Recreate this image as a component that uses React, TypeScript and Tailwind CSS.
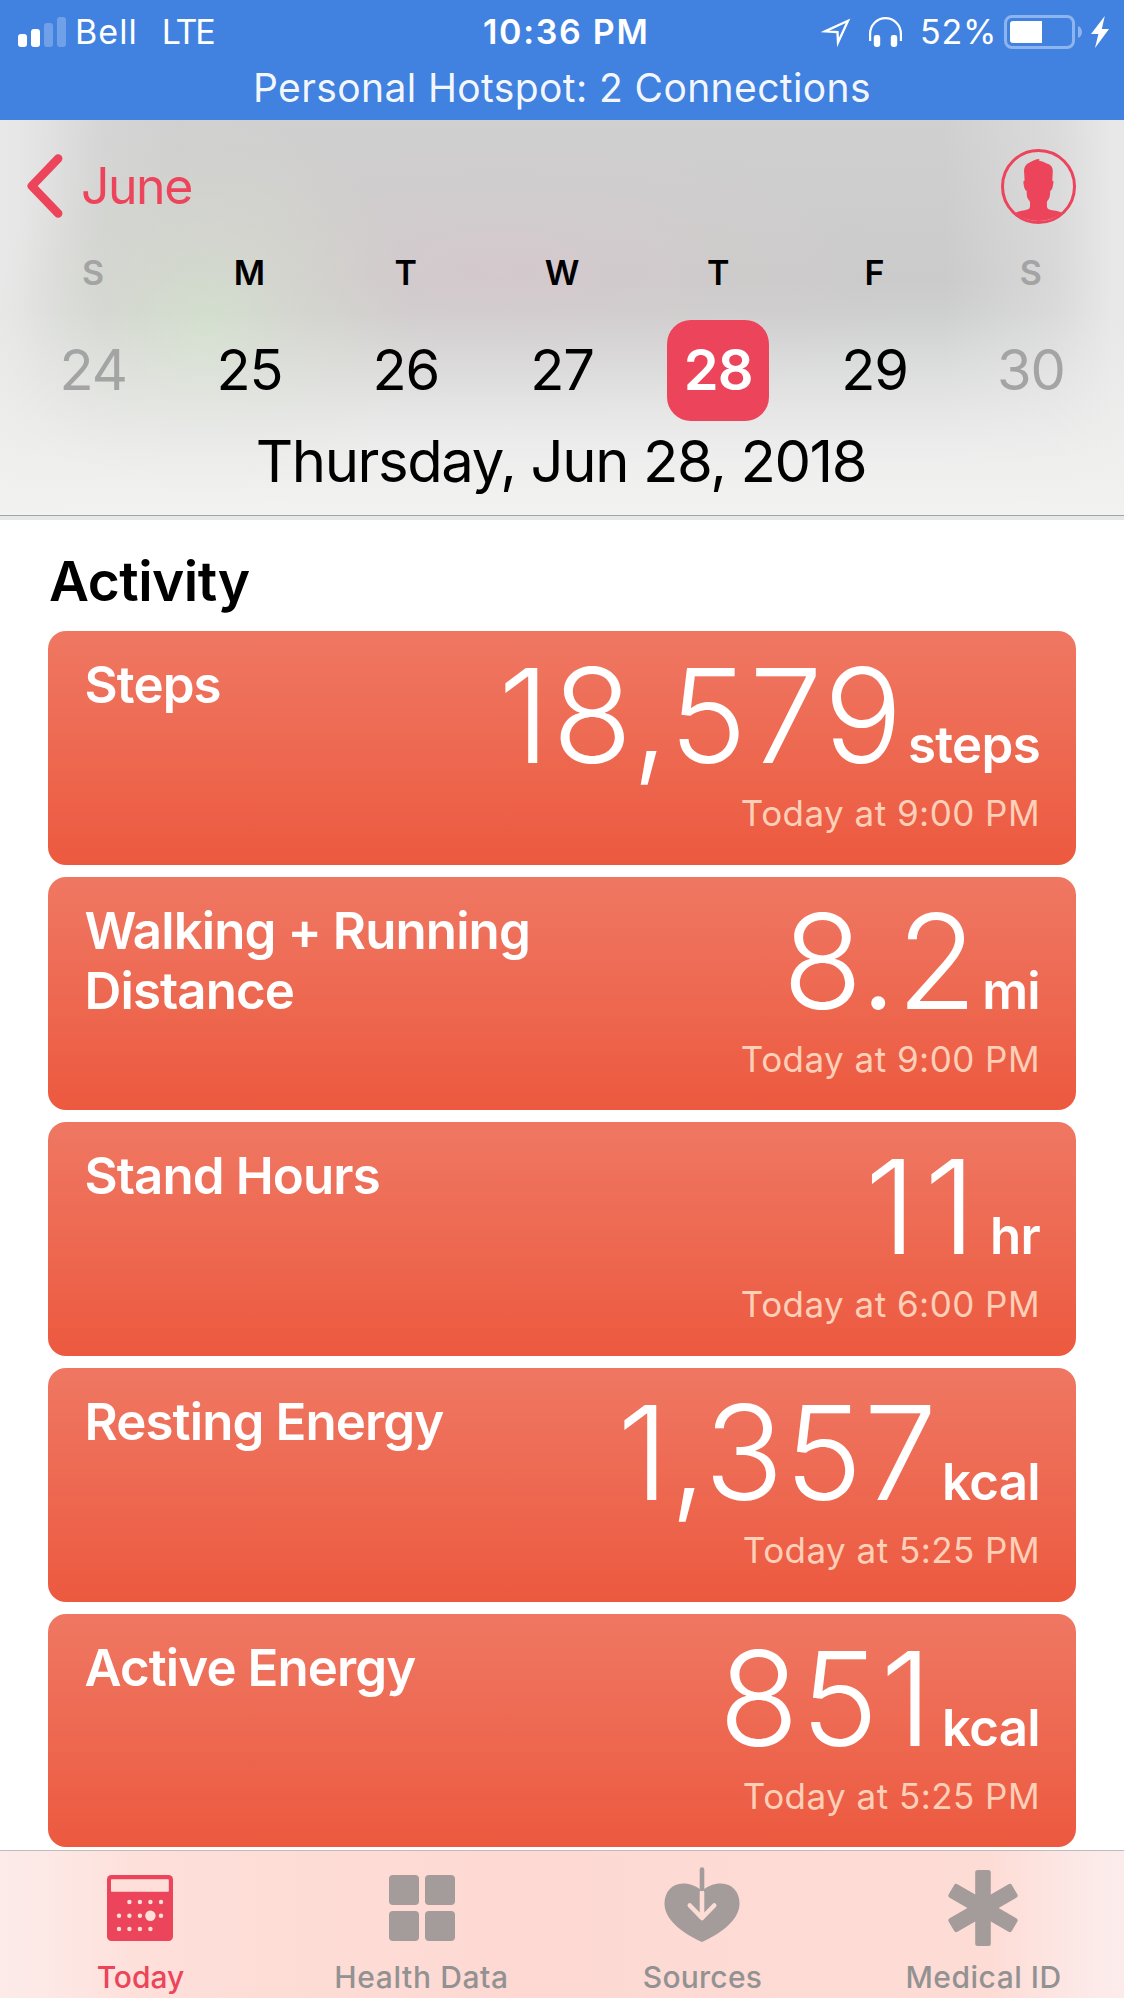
import type { ReactNode } from "react";
import clsx from "clsx";

type Metric = {
  title: string;
  value: string;
  unit: string;
  time: string;
  valueClass: string;
};

const WEEK = [
  { letter: "S", day: 24, weekend: true },
  { letter: "M", day: 25 },
  { letter: "T", day: 26 },
  { letter: "W", day: 27 },
  { letter: "T", day: 28, selected: true },
  { letter: "F", day: 29 },
  { letter: "S", day: 30, weekend: true },
];

const METRICS: Metric[] = [
  { title: "Steps", value: "18,579", unit: "steps", time: "Today at 9:00 PM", valueClass: "tracking-[2.4px] mr-[3px]" },
  { title: "Walking + Running Distance", value: "8.2", unit: "mi", time: "Today at 9:00 PM", valueClass: "mr-[5px]" },
  { title: "Stand Hours", value: "11", unit: "hr", time: "Today at 6:00 PM", valueClass: "tracking-[8px] mr-[6px]" },
  { title: "Resting Energy", value: "1,357", unit: "kcal", time: "Today at 5:25 PM", valueClass: "tracking-[1.1px] mr-[4px]" },
  { title: "Active Energy", value: "851", unit: "kcal", time: "Today at 5:25 PM", valueClass: "tracking-[2px] mr-[8px]" },
];

function SignalBars() {
  return (
    <div className="flex h-[30px] items-end gap-[4px]">
      <span className="h-[13px] w-[9px] rounded-[3px] bg-white" />
      <span className="h-[18px] w-[9px] rounded-[3px] bg-white" />
      <span className="h-[24px] w-[9px] rounded-[3px] bg-white/25" />
      <span className="h-[30px] w-[9px] rounded-[3px] bg-white/25" />
    </div>
  );
}

function Battery() {
  return (
    <div className="flex items-center gap-[3px]">
      <div className="h-[34px] w-[71px] rounded-[8px] border-[3px] border-white/40 p-[3px]">
        <div className="h-[22px] w-[32px] rounded-l-[3px] bg-white" />
      </div>
      <svg viewBox="0 0 4 12" className="h-[12px] w-[4px]">
        <path d="M0 0C2.5 1 4 3.2 4 6s-1.5 5-4 6Z" fill="#fff" fillOpacity=".4" />
      </svg>
    </div>
  );
}

function StatusBar() {
  return (
    <div className="h-[120px] bg-[#4182e1] text-white">
      <div className="flex h-[63px] items-center pl-[18px] pr-[15px] text-[34px] leading-[63px]">
        <div className="flex w-[465px] items-center">
          <SignalBars />
          <span className="ml-[9px] tracking-[1.07px]">Bell</span>
          <span className="ml-[24px] tracking-[-2.2px]">LTE</span>
        </div>
        <span className="font-semibold tracking-[1.7px]">10:36 PM</span>
        <div className="ml-auto flex items-center">
          <svg viewBox="0 0 30 30" className="h-[30px] w-[30px]" fill="none" stroke="#fff" strokeWidth="2.3">
            <path d="M4 14.4 27 3.8 17 25.5 16.5 15.2Z" strokeMiterlimit="6" />
          </svg>
          <svg viewBox="0 0 33 30" className="ml-[18px] h-[30px] w-[33px]">
            <path d="M1.1 24V17a15.4 15.8 0 0 1 30.8 0v7" fill="none" stroke="#fff" strokeWidth="2.2" />
            <rect x="4.8" y="18" width="6.4" height="12" rx="2.4" fill="#fff" />
            <rect x="21.8" y="18" width="6.4" height="12" rx="2.4" fill="#fff" />
          </svg>
          <span className="ml-[18px] w-[84px] tracking-[0.8px]">52%</span>
          <Battery />
          <svg viewBox="0 0 18 32" className="ml-[9px] h-[32px] w-[18px]">
            <path d="M13.8 0 0 18h7.4L4 32 18 13h-7.2Z" fill="#fff" />
          </svg>
        </div>
      </div>
      <div className="text-center text-[39px] leading-[50px] tracking-[0.39px] text-white/95">
        Personal Hotspot: 2 Connections
      </div>
    </div>
  );
}

function ProfileIcon() {
  return (
    <svg viewBox="0 0 75 75" className="h-[75px] w-[75px]">
      <circle cx="37.5" cy="37.5" r="36" fill="none" stroke="#ec445b" strokeWidth="3" />
      <path
        d="M38.3 10c-3.2 0-5.2 1.2-7.3 2.3-2.6 1.4-5.2 2-7 5.3-1.2 2.4-1 4.8-.8 7l.4 7.2c-1.3 0-1.4 1-1 3.2.5 3 1.2 6.5 3 6.8.2 3.2.1 6.4 1.4 8.2 1.1 1.5 2 1.9 2 3.5 0 3.5.2 5.6-1.4 6.6-2.6 1.6-8.2 1.2-13.2 3.6a36 36 0 0 0 46.2 0c-5-2.4-10.7-2-13.3-3.6-1.5-1-1.4-3.1-1.4-6.600 0-1.600.9-2 1.900-3.500 1.300-1.800 1.200-5 1.500-8.200 1.700-.3 2.400-3.800 2.900-6.800.4-2.200.3-3.200-.9-3.200l.4-7.200c.2-3 .1-5.800-1.600-7.600-1.300-1.500-3-2.200-4.500-2.500-1.600-1-4-2.500-7.300-2.500Z"
        fill="#ec445b"
      />
    </svg>
  );
}

function CalendarHeader() {
  return (
    <header className="h-[400px] bg-[linear-gradient(180deg,#f2f2f100_48%,#f2f2f159_68%,#f2f2f1b3_84%,#f2f2f1_100%),radial-gradient(ellipse_210px_210px_at_205px_205px,#d4e3cecc,#d8ddd080_45%,#d8ddd000),radial-gradient(ellipse_420px_150px_at_500px_150px,#dac8cf99,#d6cbcd59_50%,#d6cbcd00),linear-gradient(90deg,#e8e8e8_0%,#e6e6e6_2%,#e6e6e6b3_5%,#e6e6e640_9%,#e6e6e600_16%,#e6e6e600_84%,#e6e6e680_94%,#e8e8e8_99%),linear-gradient(180deg,#d0d0d0_0%,#cbcbcb_40%,#d1d2d2_55%,#dcdddd_74%,#ebecec_100%)]">
      <div className="flex h-[132px] items-center pl-[27px] pr-[48px]">
        <svg viewBox="0 0 36 64" className="h-[64px] w-[36px]" fill="none" stroke="#ec445b" strokeWidth="8.5" strokeLinecap="round">
          <path d="M31.2 4.5 4.8 32l26.400 27.500" strokeLinejoin="round" />
        </svg>
        <span className="ml-[18px] text-[50px] leading-[60px] tracking-[-1.5px] text-[#ec445b]">June</span>
        <span className="ml-auto"><ProfileIcon /></span>
      </div>

      <div className="grid grid-cols-7 px-[15px] text-center">
        {WEEK.map(({ letter, day, weekend, selected }) => (
          <div key={day} className={clsx("flex flex-col items-center", weekend ? "text-[#a4a4a4]" : "text-black")}>
            <span className="text-[34px] font-semibold leading-[41px]">{letter}</span>
            <span
              className={clsx(
                "mt-[27px] h-[101px] w-[102px] rounded-[24px] text-[56px] leading-[100px]",
                selected ? "bg-[#ec445b] font-semibold tracking-[-0.9px] text-white" : "tracking-[-1.2px]",
              )}
            >
              {day}
            </span>
          </div>
        ))}
      </div>

      <h1 className="h-[94px] pr-[2px] text-center text-[58px] leading-[80px] tracking-[-1.39px] text-black">
        Thursday, Jun 28, 2018
      </h1>
      <div className="h-[5px] border-t border-[#a3a4a6] bg-[#e6e7e7]" />
    </header>
  );
}

function MetricCard({ title, value, unit, time, valueClass }: Metric) {
  return (
    <article className="flex h-[233.6px] shrink-0 justify-between rounded-[18px] bg-linear-to-b from-[#ef7762] to-[#ec593f] pl-[36.5px] pr-[36px] text-white">
      <h3 className="w-[460px] pt-[24px] text-[51px] font-semibold leading-[60px] tracking-[-0.9px]">{title}</h3>
      <div className="flex flex-col items-end whitespace-nowrap">
        <p className="flex h-[162px] items-baseline pt-[5px] leading-[160px]">
          <span className={clsx("text-[131px] font-[280]", valueClass)}>{value}</span>
          <span className="text-[51px] font-semibold tracking-[-0.7px]">{unit}</span>
        </p>
        <p className="text-[35px] leading-[40px] tracking-[0.47px] text-[#ffcfb8]">{time}</p>
      </div>
    </article>
  );
}

function TodayIcon() {
  const cols = [12, 22.4, 32.9, 43.4, 54];
  const dots = [
    ...cols.slice(1).map((x) => [x, 27]),
    ...cols.filter((x) => x !== 43.4).map((x) => [x, 40.7]),
    ...cols.slice(0, 4).map((x) => [x, 54]),
  ];
  return (
    <svg viewBox="0 0 66 66" className="-ml-[2px] h-[66px] w-[66px]">
      <rect width="66" height="66" rx="4.5" fill="#ec445b" />
      <rect x="4" y="4.3" width="57.8" height="12.4" rx=".8" fill="#fedfda" />
      {dots.map(([x, y]) => (
        <circle key={`${x}-${y}`} cx={x} cy={y} r="2.2" fill="#fedfda" />
      ))}
      <circle cx="43.4" cy="40.7" r="5.2" fill="#fedfda" />
    </svg>
  );
}

function HealthDataIcon() {
  return (
    <div className="grid grid-cols-2 gap-[6px]">
      {[0, 1, 2, 3].map((i) => (
        <span key={i} className="h-[30px] w-[30px] rounded-[4px] bg-[#a39c9a]" />
      ))}
    </div>
  );
}

function SourcesIcon() {
  return (
    <svg viewBox="0 0 76 76" className="-ml-[2px] -mt-[8px] h-[76px] w-[76px]" fill="none" strokeLinecap="round" strokeLinejoin="round">
      <path d="M38 25C33 20 26 17.5 19 17.5 8 17.5.5 26 .5 37.5.5 53 17 66.5 38 76c21-9.500 37.500-23 37.500-38.500C75.500 26 68 17.500 57 17.500 50 17.500 43 20 38 25Z" fill="#a39c9a" />
      <path d="M38 26V50M25.8 39.5 38 52l12.200-12.500" stroke="#fedcd6" strokeWidth="4.6" />
      <path d="M38 3.5V23" stroke="#a39c9a" strokeWidth="4.6" />
    </svg>
  );
}

function MedicalIcon() {
  return (
    <svg viewBox="0 0 72 76" className="-ml-[2px] h-[76px] w-[72px]" fill="#a39c9a">
      <rect x="28.2" width="15.6" height="76" rx="2.5" />
      <rect x="28.2" y="1.5" width="15.6" height="73" rx="2.5" transform="rotate(60 36 38)" />
      <rect x="28.2" y="1.5" width="15.6" height="73" rx="2.5" transform="rotate(-60 36 38)" />
    </svg>
  );
}

function Tab({ label, active, className, children }: { label: string; active?: boolean; className?: string; children: ReactNode }) {
  return (
    <button
      type="button"
      className={clsx("flex flex-col items-center pt-[14px] text-[30px] font-medium", active ? "text-[#ec445b]" : "text-[#929292]")}
    >
      <span className="flex h-[86px] items-center justify-center">{children}</span>
      <span className={clsx("mt-[6px] leading-[40px]", className)}>{label}</span>
    </button>
  );
}

export default function App() {
  return (
    <div className="flex h-[1998px] w-[1124px] flex-col overflow-hidden bg-white font-['Inter','Liberation_Sans',sans-serif]">
      <StatusBar />
      <CalendarHeader />

      <main className="h-[1330px] overflow-hidden px-[48px]">
        <h2 className="pl-[1px] pt-[11px] text-[55px] font-semibold leading-[100px] tracking-[-0.5px] text-black">Activity</h2>
        <div className="flex flex-col gap-[12.1px]">
          {METRICS.map((m) => (
            <MetricCard key={m.title} {...m} />
          ))}
        </div>
      </main>

      <nav className="grid h-[148px] grid-cols-4 border-t border-[#bdbdbd] bg-[linear-gradient(90deg,#fcebe9_0%,#fde9e6_4%,#fedfd9_13%,#fed9d3_45%,#fedbd5_75%,#fedcd6_88%,#fceae8_97%,#fbeceb_100%)]">
        <Tab label="Today" active>
          <TodayIcon />
        </Tab>
        <Tab label="Health Data" className="tracking-[0.6px]">
          <HealthDataIcon />
        </Tab>
        <Tab label="Sources" className="tracking-[0.25px]">
          <SourcesIcon />
        </Tab>
        <Tab label="Medical ID" className="tracking-[0.5px]">
          <MedicalIcon />
        </Tab>
      </nav>
    </div>
  );
}
